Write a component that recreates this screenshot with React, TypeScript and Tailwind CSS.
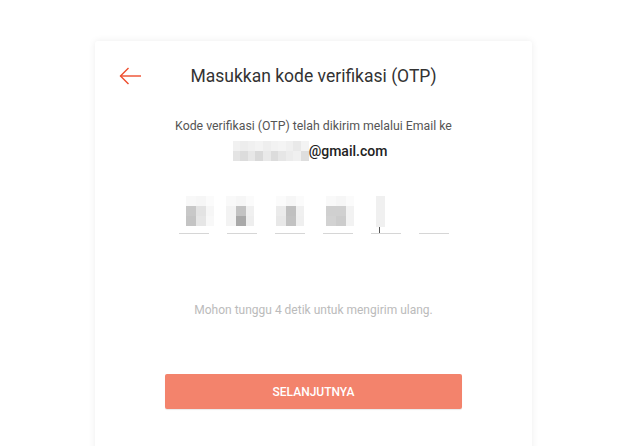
const digits: { offset: number; cells: string[] }[] = [
  { offset: 7, cells: ["#f8f8f8", "#f6f6f6", "#fbfbfb", "#c8c8c8", "#e3e3e3", "#f6f6f6", "#c4c4c4", "#e6e6e6", "#f8f8f8"] },
  { offset: -1, cells: ["#f9f9f9", "#f6f6f6", "#fbfbfb", "#f3f3f3", "#c3c3c3", "#f0f0f0", "#f3f3f3", "#a9a9a9", "#eeeeee"] },
  { offset: 1, cells: ["#fbfbfb", "#f6f6f6", "#fbfbfb", "#ebebeb", "#c0c0c0", "#f0f0f0", "#e8e8e8", "#c2c2c2", "#efefef"] },
  { offset: 3, cells: ["#f9f9f9", "#f6f6f6", "#fbfbfb", "#d0d0d0", "#d0d0d0", "#f2f2f2", "#d2d2d2", "#cccccc", "#f2f2f2"] },
];

const emailCells = [
  "#f1f1f1", "#ededed", "#f0f0f0", "#f3f3f3", "#eeeeee", "#f2f2f2", "#f4f4f4", "#f0f0f0", "#e9e9e9", "#f3f3f3",
  "#e4e4e4", "#dcdcdc", "#e7e7e7", "#d9d9d9", "#e9e9e9", "#dcdcdc", "#e6e6e6", "#ececec", "#f0f0f0", "#dedede",
];

function OtpBox({ children, caret }: { children?: React.ReactNode; caret?: boolean }) {
  return (
    <div className="relative w-[30px] h-[38px] border-b border-[#d6d6d6]">
      {children}
      {caret && <div className="absolute bottom-0 left-[8px] w-px h-[6px] bg-[#555]" />}
    </div>
  );
}

export default function App() {
  return (
    <div className="min-h-[446px] bg-white pt-[41px] font-['Roboto','Liberation_Sans',sans-serif]">
      <div className="ml-[95px] w-[437px] min-h-[420px] bg-white rounded-[3px] shadow-[0_0_7px_rgba(0,0,0,0.08)]">
        <div className="grid grid-cols-[1fr_auto_1fr] items-center h-[70px] px-6">
          <svg width="22" height="18" viewBox="0 0 22 18" fill="none" stroke="#ee4d2d" strokeWidth="1.4">
            <path d="M22 9H1.5" />
            <path d="M9.5 1L1.5 9l8 8" />
          </svg>
          <h1 className="text-[17.5px] text-[#333] leading-6">Masukkan kode verifikasi (OTP)</h1>
          <div />
        </div>

        <div className="flex flex-col items-center">
          <p className="mt-[7px] text-[12.3px] leading-4 text-[#555]">Kode verifikasi (OTP) telah dikirim melalui Email ke</p>
          <div className="mt-[8px] mr-[7px] flex items-center h-[18px]">
            <div className="grid grid-cols-10 w-[76px] h-[20px]">
              {emailCells.map((c, i) => (
                <div key={i} style={{ backgroundColor: c }} />
              ))}
            </div>
            <span className="text-[14px] font-medium text-[#222] leading-[18px]">@gmail.com</span>
          </div>

          <div className="mt-[36px] flex gap-[18px]">
            {digits.map((d, i) => (
              <OtpBox key={i}>
                <div className="absolute top-0 grid grid-cols-[10px_10px_8px] grid-rows-[10px_10px_10px]" style={{ left: d.offset }}>
                  {d.cells.map((c, j) => (
                    <div key={j} style={{ backgroundColor: c }} />
                  ))}
                </div>
              </OtpBox>
            ))}
            <OtpBox caret>
              <div className="absolute top-0 left-[5px] w-[9px] h-[31px] bg-[#f0f0f0]" />
            </OtpBox>
            <OtpBox />
          </div>

          <p className="mt-[68px] text-[12px] leading-4 text-[#bbb]">Mohon tunggu 4 detik untuk mengirim ulang.</p>

          <button className="mt-[56px] w-[297px] h-[35px] bg-[#f3836c] rounded-[2px] text-white text-[12px] font-medium uppercase shadow-[0_1px_1px_rgba(0,0,0,0.09)]">
            Selanjutnya
          </button>
        </div>
      </div>
    </div>
  );
}
